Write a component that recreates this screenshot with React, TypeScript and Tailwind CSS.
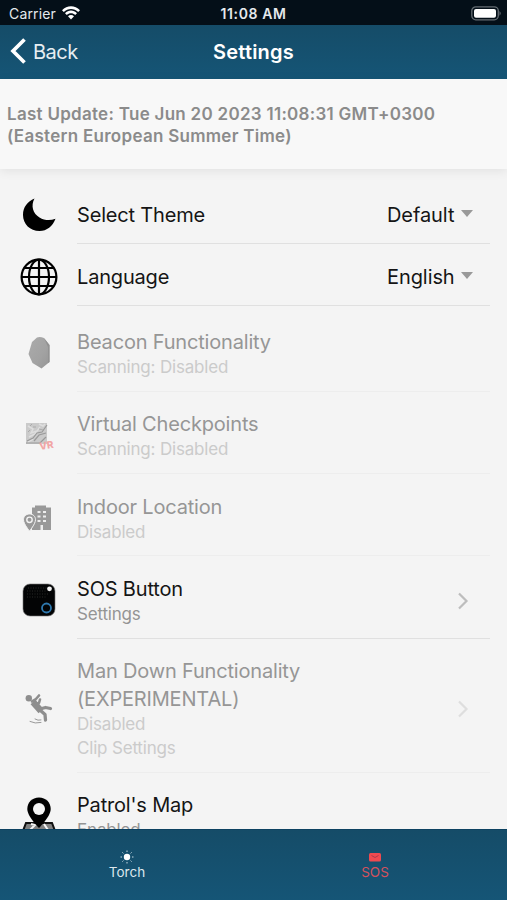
import type { ReactNode } from "react";

type RowProps = {
  icon: ReactNode;
  title: string[];
  notes?: string[];
  heightClass: string;
  titleClass?: string;
  iconClass?: string;
  value?: string;
  arrow?: boolean;
  disabled?: boolean;
};

function MoonIcon() {
  return (
    <svg width="36" height="36" viewBox="0 0 36 36">
      <path d="M13.500 1.500C9.500 9 12 16.500 18.500 20.500C23.500 23.500 29 23.800 34.500 21.800C31.500 29.500 26 34 18.500 34C9 34 2 27 2 18C2 10 6.500 4.500 13.500 1.500Z" fill="#000" />
    </svg>
  );
}

function GlobeIcon() {
  return (
    <svg width="38" height="38" viewBox="0 0 38 38" fill="none" stroke="#000" strokeWidth="2.200">
      <circle cx="19" cy="19" r="17.400" />
      <ellipse cx="19" cy="19" rx="10" ry="17.400" />
      <path d="M19 1.800V36.200M1.800 19H36.200M4.500 10H33.500M4.500 28H33.500" />
    </svg>
  );
}

function BeaconIcon() {
  return (
    <svg width="36" height="36" viewBox="0 0 36 36">
      <defs>
        <linearGradient id="stone" x1="0" y1="0" x2="1" y2="1">
          <stop offset="0" stopColor="#ababab" />
          <stop offset="0.600" stopColor="#a2a2a2" />
          <stop offset="1" stopColor="#959595" />
        </linearGradient>
      </defs>
      <path d="M16 2.500Q19 1.500 23 3L28.500 10V27L20.500 33.500L11.500 28L7.500 19L11 7Z" fill="url(#stone)" />
      <path d="M23 3L28.500 10V27L27 28V12Z" fill="#929292" />
    </svg>
  );
}

function VirtualIcon() {
  return (
    <svg width="36" height="36" viewBox="0 0 36 36">
      <rect x="5" y="6" width="21" height="21" fill="#cacaca" />
      <path d="M7 9L12 12L10 16L16 14M8 20L14 17L19 10M18 7L22 9L24 7M7 25L12 22" stroke="#dedede" strokeWidth="1.500" fill="none" />
      <path d="M6 24L12 21L16 16L21 15L26 8M13 24L18 18L25 16M5 26H19L25 20" stroke="#999" strokeWidth="1.200" fill="none" />
      <path d="M9 9L11 7M12 10H15M7 15L9 13M18 12L22 13" stroke="#aaa" fill="none" />
      <text x="19" y="33" transform="rotate(-10 19 33)" fontFamily="Inter, sans-serif" fontWeight="800" fontSize="10" fill="#f1a5a5">VR</text>
    </svg>
  );
}

function BuildingIcon() {
  return (
    <svg width="36" height="36" viewBox="0 0 36 36">
      <path d="M11 8.500H14V6.500H25V8.500H30V31H11Z" fill="#999" />
      <path d="M16.500 12H19.500V14H16.500ZM22 12H25V14H22ZM16.500 16.500H19.500V18.500H16.500ZM22 16.500H25V18.500H22ZM16.500 21H19.500V23H16.500ZM22 21H25V23H22ZM19.500 26H22V31H19.500Z" fill="#eee" />
      <path d="M8.500 15C4.700 15 2.500 17.600 2.500 20.700C2.500 25 8.500 32 8.500 32S14.500 25 14.500 20.700C14.500 17.600 12.300 15 8.500 15Z" fill="#999" stroke="#f4f4f4" />
      <circle cx="8.500" cy="20.800" r="2.700" fill="#999" stroke="#f4f4f4" strokeWidth="1.400" />
    </svg>
  );
}

function ButtonIcon() {
  return (
    <svg width="36" height="36" viewBox="0 0 36 36">
      <rect x="2" y="2" width="32" height="32" rx="7" fill="#030405" stroke="#777" strokeWidth="0.600" />
      <path d="M7 6H26M6 9H26M6 12H28M6 15H26" stroke="#292929" strokeWidth="1" strokeDasharray="1 1.500" />
      <circle cx="28.500" cy="6.800" r="2.400" fill="#f3f3f3" />
      <circle cx="25.500" cy="26" r="4.500" fill="none" stroke="#2e78ae" strokeWidth="1.800" />
    </svg>
  );
}

function FallingIcon() {
  return (
    <svg width="36" height="36" viewBox="0 0 36 36" fill="none" stroke="#8e8e8e" strokeLinecap="round" strokeLinejoin="round">
      <circle cx="7.800" cy="7.200" r="3.200" fill="#8e8e8e" stroke="none" />
      <path d="M12 11L20 20" strokeWidth="6.500" strokeLinecap="butt" />
      <path d="M11 10.500L14.500 8.500L18 4.500M15 13L18 12L19 8.500" strokeWidth="2.600" />
      <path d="M19 18L24.500 16.500L29.500 17.500M19 19L24 23.500L24.500 29" strokeWidth="3.300" />
      <path d="M9 30.500Q14 33 20 31.500M14 28Q17 30 20 29" strokeWidth="0.900" />
    </svg>
  );
}

function MapIcon() {
  return (
    <svg width="36" height="36" viewBox="0 0 36 36">
      <path d="M5 27H31L36 40H0Z" fill="#808080" stroke="#111" strokeWidth="2" />
      <path d="M10 28L14 29L9 34M23 28L27 34" stroke="#f4f4f4" strokeWidth="2" fill="none" />
      <path d="M18 1.500C11 1.500 6.300 6.500 6.300 13C6.300 20.500 18 32 18 32S29.700 20.500 29.700 13C29.700 6.500 25 1.500 18 1.500Z" fill="#000" />
      <circle cx="18" cy="13" r="6" fill="#f4f4f4" />
    </svg>
  );
}

function Row({ icon, title, notes = [], heightClass, titleClass = "pt-[19px]", iconClass = "pt-1 pl-[21px]", value, arrow, disabled }: RowProps) {
  return (
    <div className={`flex shrink-0 ${heightClass}`}>
      <div className={`flex w-[77px] items-center ${iconClass}`}>{icon}</div>
      <div className={`flex w-[413px] border-b ${disabled ? "border-[#ededed]" : "border-[#e0e0e0]"}`}>
        <div className={`flex-1 ${titleClass}`}>
          {title.map((line) => (
            <div key={line} className={`text-[20px] leading-[28px] tracking-[-0.18px] ${disabled ? "text-[#969696]" : "text-[#151515]"}`}>{line}</div>
          ))}
          {notes.length > 0 && (
            <div className="-mt-px">
              {notes.map((line) => (
                <div key={line} className={`text-[17px] leading-[24px] tracking-[-0.18px] ${disabled ? "text-[#cbcbcb]" : "text-[#949494]"}`}>{line}</div>
              ))}
            </div>
          )}
        </div>
        {value && (
          <div className={`flex w-[103px] gap-[7px] text-[20px] leading-[28px] text-[#151515] ${titleClass}`}>
            <span className="w-[67px] tracking-[-0.08px] whitespace-nowrap">{value}</span>
            <svg className="mt-[9px]" width="12" height="7" viewBox="0 0 12 7"><path d="M0 0H12L6 7Z" fill="#999" /></svg>
          </div>
        )}
        {arrow && (
          <div className="flex w-[33px] items-center pt-[7px]">
            <svg width="12" height="18" viewBox="0 0 12 18"><path d="M2 1.500L9.500 9L2 16.500" fill="none" stroke={disabled ? "#dedede" : "#bdbdbd"} strokeWidth="2.200" /></svg>
          </div>
        )}
      </div>
    </div>
  );
}

export default function App() {
  return (
    <div className="flex h-[900px] w-[507px] flex-col overflow-hidden bg-[#f4f4f4] font-['Inter',sans-serif]">
      <div className="grid h-[25px] shrink-0 grid-cols-3 items-center bg-[#040f18] pt-[3px] text-[14px] leading-5 text-[#e5e9ed]">
        <div className="flex items-center gap-[6px] pl-[9px]">
          <span className="tracking-[0.15px]">Carrier</span>
          <svg className="-mt-[2px]" width="18" height="14" viewBox="0 0 18 14" fill="#fff">
            <path d="M0 4.300C5-1.200 13-1.200 18 4.300L16.200 6.100C12.200 2 5.800 2 1.800 6.100Z" />
            <path d="M3 7.200C6.300 3.700 11.700 3.700 15 7.200L13.200 9C10.900 6.700 7.100 6.700 4.800 9Z" />
            <path d="M6 10.200C7.700 8.500 10.300 8.500 12 10.200L9 13.400Z" />
          </svg>
        </div>
        <span className="text-center font-semibold tracking-[0.6px]">11:08 AM</span>
        <div className="flex justify-end pr-[5px]">
          <svg className="-mt-[2px]" width="31" height="15" viewBox="0 0 31 15">
            <rect x="0.800" y="0.800" width="26.500" height="13" rx="4" fill="#040f18" stroke="#646c72" strokeWidth="1.300" />
            <rect x="3" y="3" width="22" height="8.800" rx="2" fill="#fff" />
            <path d="M28.500 5Q31 7.300 28.500 9.700Z" fill="#646c72" />
          </svg>
        </div>
      </div>
      <header className="grid h-[54px] shrink-0 grid-cols-3 items-center bg-linear-to-b from-[#154c68] to-[#155576] text-white">
        <div className="flex items-center gap-[7px] pl-[10px] text-[20px]">
          <svg className="-mt-[2px]" width="16" height="26" viewBox="0 0 16 26"><path d="M14.500 1.500L3 13L14.500 24.500" fill="none" stroke="#fff" strokeWidth="3.700" /></svg>
          <span className="tracking-[-0.5px] text-[#e6eef2]">Back</span>
        </div>
        <h1 className="text-center text-[20px] font-semibold tracking-[0.2px]">Settings</h1>
      </header>
      <section className="h-[90px] shrink-0 bg-[#f8f8f8] pt-[24px] pl-[7px] text-[17px] leading-[22px] font-semibold tracking-[0.28px] text-[#8b8b8b] shadow-[0_2px_10px_rgba(0,0,0,0.08)]">
        <div className="whitespace-nowrap">Last Update: Tue Jun 20 2023 11:08:31 GMT+0300</div>
        <div className="whitespace-nowrap">(Eastern European Summer Time)</div>
      </section>
      <main className="flex min-h-0 flex-1 flex-col overflow-hidden pt-[13px]">
        <Row icon={<MoonIcon />} title={["Select Theme"]} value="Default" heightClass="h-[62px]" />
        <Row icon={<GlobeIcon />} title={["Language"]} value="English" heightClass="h-[62px]" iconClass="pt-1 pl-[20px]" />
        <Row icon={<BeaconIcon />} title={["Beacon Functionality"]} notes={["Scanning: Disabled"]} heightClass="h-[86px]" titleClass="pt-[22px]" iconClass="pt-[8px] pl-[21px]" disabled />
        <Row icon={<VirtualIcon />} title={["Virtual Checkpoints"]} notes={["Scanning: Disabled"]} heightClass="h-[82px]" titleClass="pt-[18px]" disabled />
        <Row icon={<BuildingIcon />} title={["Indoor Location"]} notes={["Disabled"]} heightClass="h-[82px]" disabled />
        <Row icon={<ButtonIcon />} title={["SOS Button"]} notes={["Settings"]} heightClass="h-[83px]" arrow />
        <Row icon={<FallingIcon />} title={["Man Down Functionality", "(EXPERIMENTAL)"]} notes={["Disabled", "Clip Settings"]} heightClass="h-[134px]" titleClass="pt-[18px]" iconClass="pt-[6px] pl-[21px]" arrow disabled />
        <Row icon={<MapIcon />} title={["Patrol's Map"]} notes={["Enabled"]} heightClass="h-[83px]" titleClass="pt-[18px]" iconClass="pb-px pl-[21px]" />
      </main>
      <footer className="grid h-[71px] shrink-0 grid-cols-[254px_242px] border-t border-[#0d4261] bg-linear-to-b from-[#154c68] to-[#155576] pt-[20px] text-[13.5px] leading-[17px]">
        <div className="flex flex-col items-center text-[#dce7ec]">
          <svg width="14" height="14" viewBox="0 0 14 14">
            <circle cx="7" cy="7" r="3.200" fill="#fff" />
            <path d="M7 0.500V2M7 12V13.500M0.500 7H2M12 7H13.500M2.400 2.400L3.400 3.400M10.600 10.600L11.600 11.600M2.400 11.600L3.400 10.600M10.600 3.400L11.600 2.400" stroke="#c7d8e1" />
          </svg>
          <span>Torch</span>
        </div>
        <div className="flex flex-col items-center text-[#d4515d]">
          <svg width="14" height="14" viewBox="0 0 14 14">
            <rect x="1" y="3" width="12" height="8.500" rx="1.500" fill="#ef4a50" />
            <path d="M3.500 5.500L7 7.500L10.500 5.500" fill="none" stroke="#a93b4d" />
          </svg>
          <span>SOS</span>
        </div>
      </footer>
    </div>
  );
}
